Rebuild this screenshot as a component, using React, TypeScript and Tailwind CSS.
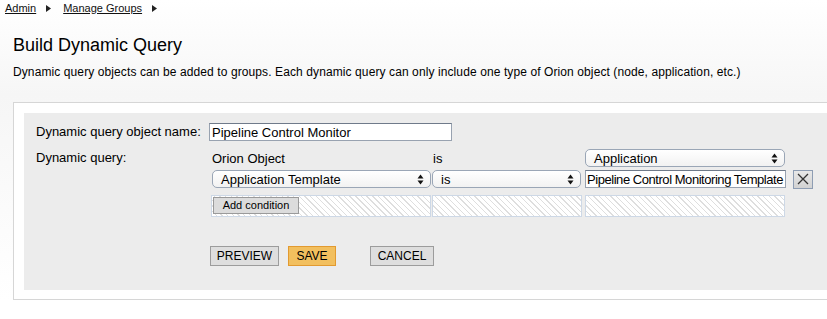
import React from "react";

const hatch =
  "bg-[repeating-linear-gradient(45deg,#ffffff_0px,#ffffff_3px,#dedede_3px,#dedede_4px)]";

function Arrows() {
  return (
    <svg width="7" height="11" viewBox="0 0 7 11" className="shrink-0">
      <path d="M3.5 0.5 L6.5 4.5 L0.5 4.5 Z" fill="#111" />
      <path d="M3.5 10.5 L6.5 6.5 L0.5 6.5 Z" fill="#111" />
    </svg>
  );
}

function Select({ text, w }: { text: string; w: string }) {
  return (
    <div
      className={`${w} h-[18px] flex items-center justify-between rounded-[5px] border border-[#9aa6b6] bg-gradient-to-b from-white to-[#f2f2f2] pl-[8px] pr-[6px] text-[13px] leading-none text-black`}
    >
      <span>{text}</span>
      <Arrows />
    </div>
  );
}

function Crumb({ children }: { children: React.ReactNode }) {
  return (
    <span className="underline text-[#111] decoration-[#111]">{children}</span>
  );
}

function Tri() {
  return (
    <svg width="5" height="7" viewBox="0 0 5 7" className="shrink-0">
      <path d="M0 0 L5 3.5 L0 7 Z" fill="#222" />
    </svg>
  );
}

export default function App() {
  return (
    <div
      className="w-[827px] h-[319px] overflow-hidden bg-[linear-gradient(#ffffff_0px,#f6f6f6_95px,#ffffff_300px)] text-black"
      style={{ fontFamily: '"Liberation Sans", Arial, Helvetica, sans-serif' }}
    >
      {/* breadcrumb */}
      <div className="flex items-center h-[17px] pl-[5px] text-[11px] leading-none">
        <Crumb>Admin</Crumb>
        <span className="ml-[10px] mr-[12px] flex"><Tri /></span>
        <Crumb>Manage Groups</Crumb>
        <span className="ml-[10px] flex"><Tri /></span>
      </div>

      <h1 className="ml-[13px] mt-[17px] text-[18px] leading-[22px]">Build Dynamic Query</h1>
      <p className="ml-[13px] mt-[9px] text-[12px] leading-[15px] tracking-[0.1px]">
        Dynamic query objects can be added to groups. Each dynamic query can only include one type of Orion object (node, application, etc.)
      </p>

      {/* outer box */}
      <div className="ml-[13px] mt-[22px] border-l border-t border-b border-[#d6d6d6] bg-white pl-[10px] pt-[10px] pb-[9px]">
        <div className="bg-[#ececec] pl-[12px] pt-[10px] pb-[24px] text-[13px]">
          {/* row 1 */}
          <div className="flex items-center h-[18px]">
            <div className="w-[173px]">Dynamic query object name:</div>
            <div className="w-[243px] h-[18px] border border-[#98a2b0] border-t-[#6f7a8a] bg-white flex items-center pl-[2px] leading-none">
              Pipeline Control Monitor
            </div>
          </div>

          {/* row 2: dynamic query */}
          <div className="flex mt-[8px]">
            <div className="w-[175px] leading-[18px]">Dynamic query:</div>
            <div className="flex flex-col">
              {/* header row */}
              <div className="flex items-center h-[18px]">
                <div className="w-[221px] pl-[1px] leading-none">Orion Object</div>
                <div className="w-[153px] pl-[1px] leading-none">is</div>
                <Select text="Application" w="w-[200px]" />
              </div>
              {/* condition row */}
              <div className="flex items-center h-[18px] mt-[3px]">
                <div className="w-[221px] pl-[1px]">
                  <Select text="Application Template" w="w-[219px]" />
                </div>
                <div className="w-[153px]">
                  <Select text="is" w="w-[149px]" />
                </div>
                <div className="w-[201px] h-[18px] border border-[#98a2b0] border-t-[#6f7a8a] bg-white flex items-center pl-[1px] overflow-hidden whitespace-nowrap leading-none tracking-[-0.45px]">
                  Pipeline Control Monitoring Template
                </div>
                <div className="ml-[7px] w-[20px] h-[19px] border border-[#8e9db3] bg-gradient-to-b from-[#e8e8e8] to-[#d2d2d2] flex items-center justify-center">
                  <svg width="12" height="12" viewBox="0 0 12 12">
                    <path d="M1 1 L11 11 M11 1 L1 11" stroke="#333" strokeWidth="1.3" />
                  </svg>
                </div>
              </div>
              {/* add condition row */}
              <div className="flex h-[22px] mt-[7px]">
                <div className={`w-[220px] h-[22px] border border-[#cdd8e6] ${hatch} pl-[1px] pt-[1px]`}>
                  <div className="w-[86px] h-[17px] border border-[#9a9a9a] bg-[#dcdcdc] text-[11px] leading-none flex items-center justify-center">
                    Add condition
                  </div>
                </div>
                <div className={`ml-[1px] w-[150px] h-[22px] border border-[#cdd8e6] ${hatch}`} />
                <div className={`ml-[3px] w-[200px] h-[22px] border border-[#cdd8e6] ${hatch}`} />
              </div>
            </div>
          </div>

          {/* buttons */}
          <div className="flex ml-[174px] mt-[29px] text-[12px]">
            <div className="w-[69px] h-[20px] border border-[#9c9c9c] bg-[#dedede] flex items-center justify-center leading-none">
              PREVIEW
            </div>
            <div className="ml-[9px] w-[48px] h-[20px] border border-[#e29a30] bg-[#f2bf5e] flex items-center justify-center leading-none">
              SAVE
            </div>
            <div className="ml-[34px] w-[64px] h-[20px] border border-[#9c9c9c] bg-[#dedede] flex items-center justify-center leading-none">
              CANCEL
            </div>
          </div>
        </div>
      </div>
    </div>
  );
}
